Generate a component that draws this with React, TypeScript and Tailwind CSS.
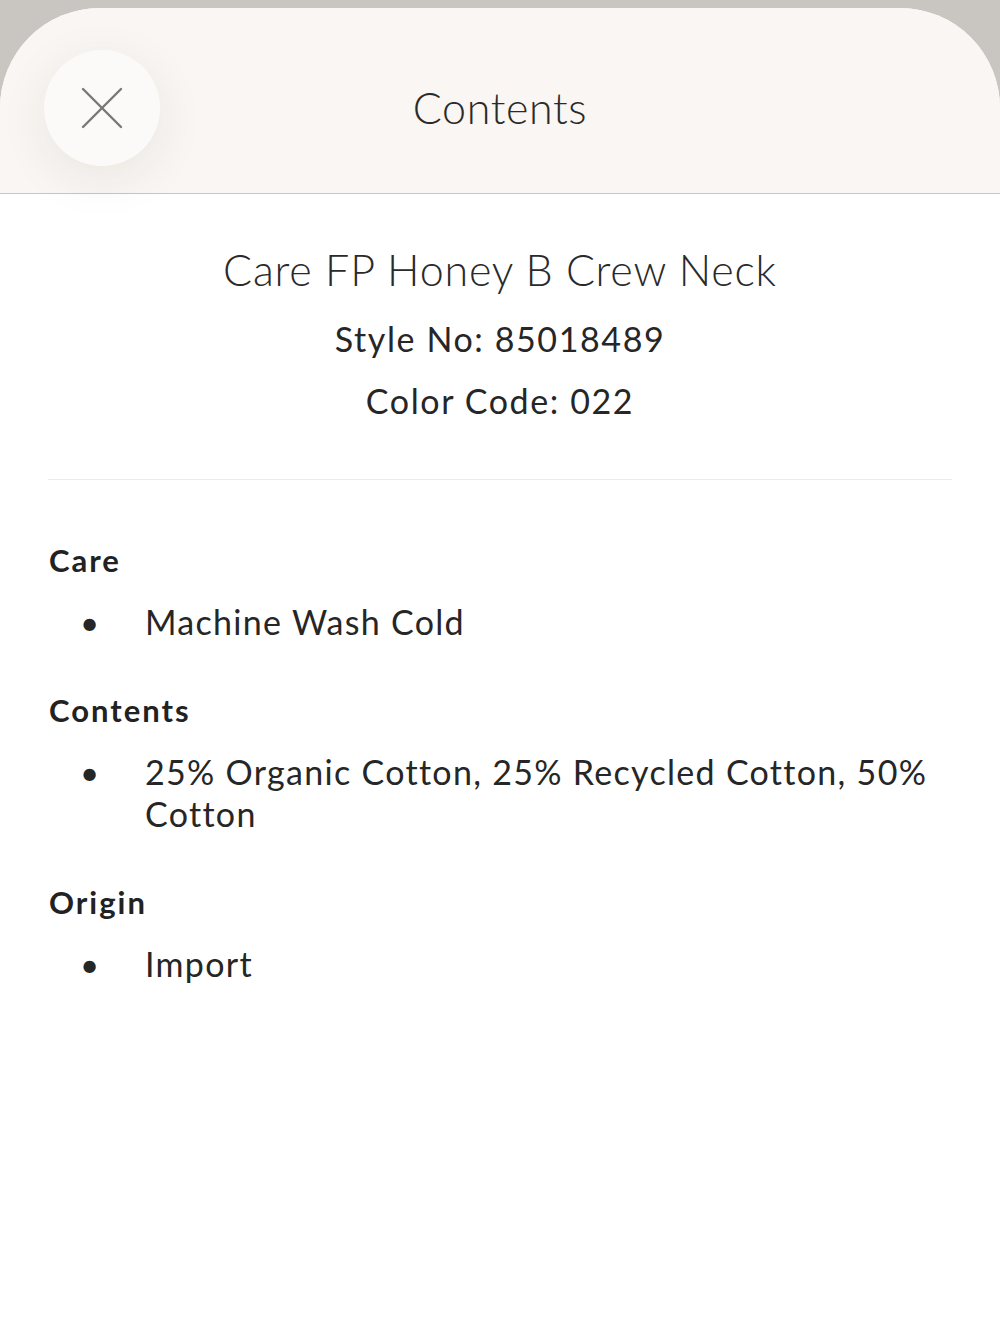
import React from 'react';

const sections = [
  { title: 'Care', items: ['Machine Wash Cold'] },
  { title: 'Contents', items: ['25% Organic Cotton, 25% Recycled Cotton, 50% Cotton'] },
  { title: 'Origin', items: ['Import'] },
];

export default function App() {
  return (
    <div className="min-h-[1333px] bg-[#c9c6c2] pt-2 font-['Lato','Open_Sans',sans-serif] text-[#262626]">
      <div className="min-h-[1325px] rounded-t-[100px] bg-white overflow-hidden">
        {/* Header */}
        <div className="relative h-[186px] bg-[#f9f6f3] border-b border-[#c8c5c1] flex items-center justify-center">
          <button className="absolute left-[44px] top-[42px] z-10 w-[116px] h-[116px] rounded-full bg-[#fcfaf8] shadow-[0_12px_50px_rgba(60,50,40,0.08)] flex items-center justify-center">
            <svg width="44" height="44" viewBox="0 0 44 44" fill="none" stroke="#7a7876" strokeWidth="2.4" strokeLinecap="round">
              <path d="M3 3 L41 41" />
              <path d="M41 3 L3 41" />
            </svg>
          </button>
          <h1 className="text-[43px] font-light tracking-[0.6px] text-[#2a2a2a] mt-[16px]">Contents</h1>
        </div>

        {/* Product */}
        <div className="text-center pt-[48px] pb-[60px]">
          <h2 className="text-[43px] font-light tracking-[0.8px] leading-[56px] text-[#2a2a2a]">Care FP Honey B Crew Neck</h2>
          <p className="mt-[23px] text-[34px] tracking-[1.6px] leading-[36px]">Style No: 85018489</p>
          <p className="mt-[26px] text-[34px] tracking-[1.6px] leading-[36px]">Color Code: 022</p>
        </div>

        <div className="mx-[48px] border-t border-[#ececec]" />

        {/* Details */}
        <div className="px-[49px] pt-[60px]">
          {sections.map((s) => (
            <div key={s.title} className="mb-[47px]">
              <h3 className="text-[31px] font-bold tracking-[2px] leading-[40px] text-[#222]">{s.title}</h3>
              <ul className="mt-[21px]">
                {s.items.map((item) => (
                  <li key={item} className="flex items-start">
                    <span className="w-[96px] shrink-0 pl-[31px] text-[33px] leading-[42px]">•</span>
                    <span className="text-[34px] tracking-[1.3px] leading-[42px]">{item}</span>
                  </li>
                ))}
              </ul>
            </div>
          ))}
        </div>
      </div>
    </div>
  );
}
